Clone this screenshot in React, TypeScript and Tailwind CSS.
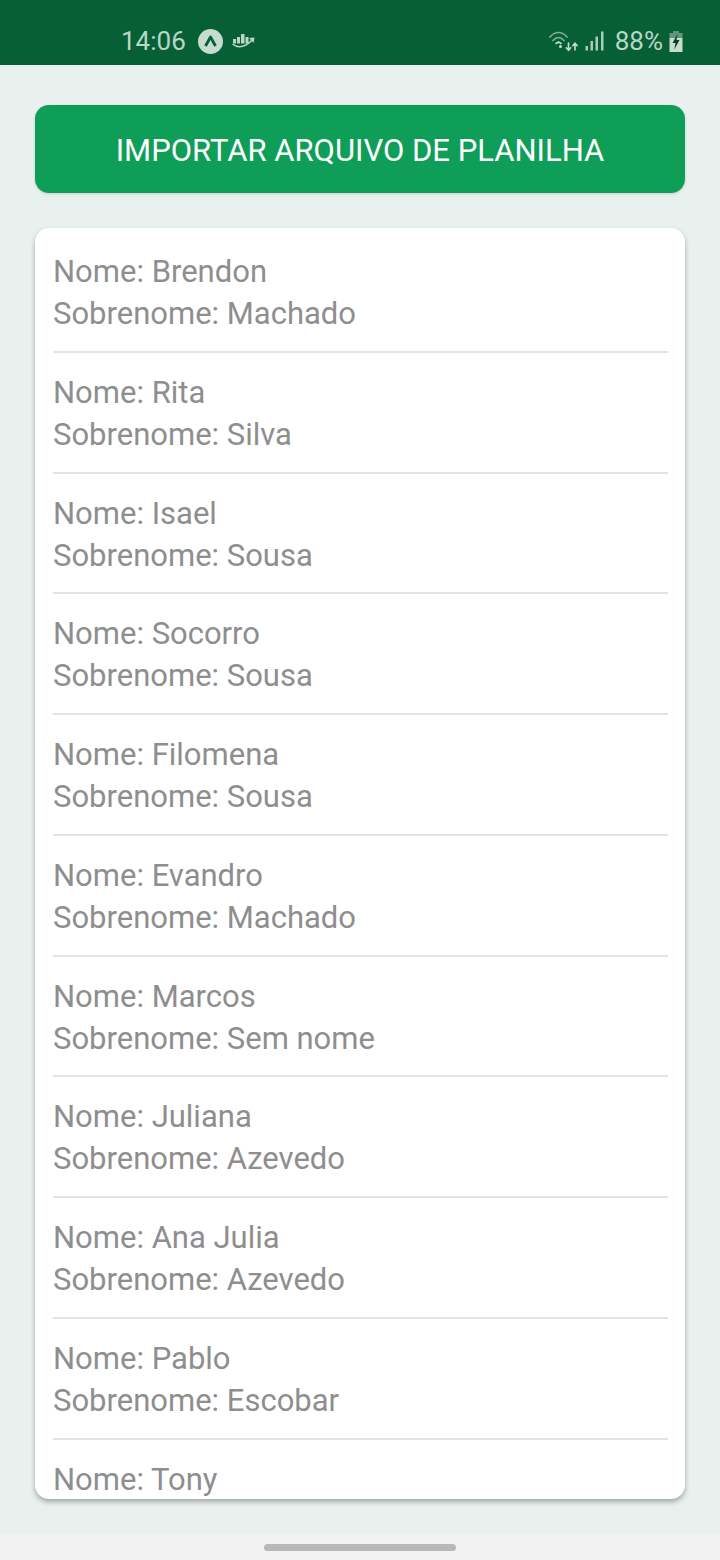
const people = [
  ['Brendon', 'Machado'],
  ['Rita', 'Silva'],
  ['Isael', 'Sousa'],
  ['Socorro', 'Sousa'],
  ['Filomena', 'Sousa'],
  ['Evandro', 'Machado'],
  ['Marcos', 'Sem nome'],
  ['Juliana', 'Azevedo'],
  ['Ana Julia', 'Azevedo'],
  ['Pablo', 'Escobar'],
  ['Tony', ''],
]

function StatusBar() {
  return (
    <div className="flex h-[65px] shrink-0 items-center bg-[#075f36] pt-[17px] pl-[121px] pr-[37px] text-[#b9d6c6]">
      <span className="text-[26px] leading-none">14:06</span>
      {/* app badge */}
      <svg width="25" height="25" viewBox="0 0 25 25" className="ml-[12px]">
        <circle cx="12.5" cy="12.5" r="12.5" fill="#c5dccf" />
        <path d="M7.5 17 L12.5 8 L17.5 17" fill="none" stroke="#075f36" strokeWidth="2.8" strokeLinejoin="round" />
      </svg>
      {/* chart ship */}
      <svg width="23" height="14" viewBox="0 0 23 14" className="ml-[9px]" fill="#b9d6c6">
        <rect x="1" y="5" width="3" height="4.5" />
        <rect x="5" y="3" width="3" height="6.5" />
        <rect x="9" y="0" width="3.5" height="9.5" />
        <rect x="13.5" y="3" width="3" height="6.5" />
        <path d="M0.5 10 C5 14 13 14 20 6" fill="none" stroke="#b9d6c6" strokeWidth="1.5" />
        <path d="M17 4 L22.5 3.5 L21.5 9 Z" />
      </svg>
      <div className="ml-auto flex items-center">
        {/* wifi */}
        <svg width="30" height="22" viewBox="0 0 30 22" fill="none" strokeLinecap="round">
          <path d="M1 7 C6 1 13 1 18 7" stroke="#7fae95" strokeWidth="1.7" />
          <path d="M4 10.5 C7.5 6.5 11.5 6.5 15 10.5" stroke="#7fae95" strokeWidth="1.7" />
          <path d="M7 13.5 C8.5 12 10.5 12 12 13.5" stroke="#c5dccf" strokeWidth="1.7" />
          <circle cx="11.5" cy="16.5" r="1.5" fill="#c5dccf" />
          <path d="M19.5 13 V20 M17.3 17.8 L19.5 20.3 L21.7 17.8" stroke="#c5dccf" strokeWidth="1.6" />
          <path d="M26 20 V13.5 M23.8 15.7 L26 13.2 L28.2 15.7" stroke="#c5dccf" strokeWidth="1.6" />
        </svg>
        {/* signal */}
        <svg width="19" height="20" viewBox="0 0 19 20" fill="#a9ccb8" className="ml-[6px]">
          <rect x="0.5" y="15" width="2.5" height="4.5" />
          <rect x="5.5" y="10" width="2.5" height="9.5" />
          <rect x="10.5" y="5.5" width="2.5" height="14" />
          <rect x="16" y="0.5" width="2.5" height="19" />
        </svg>
        <span className="ml-[11px] text-[26px] leading-none">88%</span>
        {/* battery */}
        <svg width="14" height="21" viewBox="0 0 14 21" className="ml-[6px]">
          <rect x="4" y="0" width="6" height="2.5" fill="#5f957a" />
          <rect x="0.5" y="2" width="13" height="5" fill="#5f957a" />
          <rect x="0.5" y="7" width="13" height="14" fill="#c5dccf" />
          <path d="M8.5 3 L3.5 12 H6.5 L5.3 18.5 L10.5 9 H7.5 Z" fill="#0b3b24" />
        </svg>
      </div>
    </div>
  )
}

function PersonRow({ name, surname, last }: { name: string; surname: string; last: boolean }) {
  return (
    <div className={last ? 'shrink-0 pt-[19px]' : 'h-[120.75px] shrink-0 border-b-2 border-[#e3e3e3] pt-[19px]'}>
      <p className="text-[31px] leading-[42px]">Nome: {name}</p>
      {!last && <p className="text-[31px] leading-[42px]">Sobrenome: {surname}</p>}
    </div>
  )
}

export default function App() {
  return (
    <div className="flex h-[1560px] w-[720px] flex-col overflow-hidden bg-[#e8f1ee] font-['Roboto',sans-serif]">
      <StatusBar />

      <main className="flex min-h-0 flex-1 flex-col px-[35px] pt-10 pb-[35px]">
        <button className="flex h-[88px] shrink-0 items-center justify-center rounded-[14px] bg-[#0f9e58] pt-1 text-[31px] text-white shadow-[0_1px_3px_rgba(0,0,0,0.15)]">
          IMPORTAR ARQUIVO DE PLANILHA
        </button>

        {/* List */}
        <div className="mt-[35px] min-h-0 flex-1 overflow-hidden rounded-[14px] bg-white pt-1 shadow-[0_3px_5px_rgba(0,0,0,0.3)]">
          <div className="flex h-full flex-col overflow-hidden pl-[18px] pr-[17px] text-[#8e8e8e]">
            {people.map(([name, surname], i) => (
              <PersonRow key={name} name={name} surname={surname} last={i === people.length - 1} />
            ))}
          </div>
        </div>
      </main>

      {/* Gesture bar */}
      <div className="flex h-[26px] shrink-0 items-center justify-center bg-[#f2f2f2]">
        <div className="h-[7px] w-[192px] rounded-full bg-[#b8b8b8]" />
      </div>
    </div>
  )
}
